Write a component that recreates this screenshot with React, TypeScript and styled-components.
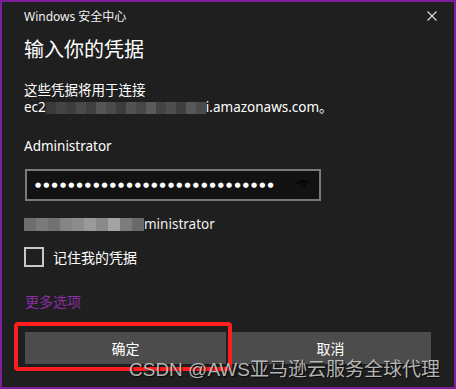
import styled, { createGlobalStyle } from "styled-components";

const GlobalStyle = createGlobalStyle`
    html, body {
        margin: 0;
        padding: 0;
        background: #1f1f1f;
    }
    * {
        box-sizing: border-box;
    }
`;

const FONT = `"Noto Sans", "Noto Sans CJK SC", sans-serif`;

const hiddenHost = ["#3a3a3a", "#444", "#3d3d3d", "#4a4a4a", "#404040", "#555", "#4b4b4b", "#3c3c3c", "#525252", "#474747", "#5a5a5a", "#444", "#4e4e4e", "#3f3f3f", "#585858", "#4a4a4a"];
const hiddenUser = ["#6e6e6e", "#7a7a7a", "#727272", "#858585", "#8c8c8c", "#9a9a9a", "#8a8a8a", "#a3a3a3", "#7c7c7c", "#6a6a6a"];

const App = () => {
    return (
        <>
            <GlobalStyle />
            <Window>
                <TitleBar>
                    <AppName>Windows 安全中心</AppName>
                    <CloseButton aria-label="close">
                        <svg width="10" height="10" viewBox="0 0 10 10">
                            <path d="M0.5 0.5 L9.5 9.5 M9.5 0.5 L0.5 9.5" stroke="#e0e0e0" strokeWidth="1.1" />
                        </svg>
                    </CloseButton>
                </TitleBar>
                <Content>
                    <Heading>输入你的凭据</Heading>
                    <Message>
                        <span>这些凭据将用于连接</span>
                        <Line>
                            ec2
                            <Mosaic>
                                {hiddenHost.map((c, i) => (
                                    <Tile key={i} style={{ background: c }} />
                                ))}
                            </Mosaic>
                            i.amazonaws.com。
                        </Line>
                    </Message>
                    <UserName>Administrator</UserName>
                    <PasswordBox>
                        <Dots>{"●".repeat(29)}</Dots>
                        <EyeIcon width="14" height="10" viewBox="0 0 14 10">
                            <path d="M1 6 C3 1.5, 11 1.5, 13 6" fill="none" stroke="#020202" strokeWidth="1.2" />
                            <circle cx="7" cy="6.5" r="2" fill="none" stroke="#020202" strokeWidth="1.2" />
                        </EyeIcon>
                    </PasswordBox>
                    <Account>
                        <Mosaic $tall>
                            {hiddenUser.map((c, i) => (
                                <Tile key={i} $wide style={{ background: c }} />
                            ))}
                        </Mosaic>
                        ministrator
                    </Account>
                    <Remember>
                        <Checkbox />
                        <span>记住我的凭据</span>
                    </Remember>
                    <MoreLink>更多选项</MoreLink>
                </Content>
                <Buttons>
                    <Button>确定</Button>
                    <Button>取消</Button>
                </Buttons>
                <Highlight />
                <Watermark>CSDN @AWS亚马逊云服务全球代理</Watermark>
            </Window>
        </>
    );
};

const Window = styled.div`
    position: relative;
    width: 456px;
    height: 389px;
    display: flex;
    flex-flow: column;

    background: #1f1f1f;
    border: 2px solid #7d1f9c;
    color: #ffffff;
    font-family: ${FONT};
    overflow: hidden;
`;

const TitleBar = styled.div`
    display: flex;
    align-items: center;
    justify-content: space-between;
    height: 32px;
    padding: 0 17px 0 22px;
    margin-top: -2px;
`;

const AppName = styled.span`
    font-size: 12px;
    color: #f2f2f2;
`;

const CloseButton = styled.div`
    display: flex;
    width: 10px;
    height: 10px;
`;

const Content = styled.div`
    display: flex;
    flex-flow: column;
    align-items: flex-start;
    padding: 0 22px;
`;

const Heading = styled.h1`
    margin: 4px 0 0;
    font-size: 20px;
    font-weight: 400;
    line-height: 28px;
`;

const Message = styled.div`
    display: flex;
    flex-flow: column;
    margin-top: 18px;
    font-size: 13.5px;
    line-height: 17px;
`;

const Line = styled.div`
    display: flex;
    align-items: center;
`;

const Mosaic = styled.span<{ $tall?: boolean }>`
    display: inline-flex;
    height: ${(p) => (p.$tall ? "13px" : "12px")};
`;

const Tile = styled.span<{ $wide?: boolean }>`
    width: ${(p) => (p.$wide ? "12px" : "10px")};
    height: 100%;
`;

const UserName = styled.div`
    margin-top: 20px;
    font-size: 13.5px;
    line-height: 20px;
`;

const PasswordBox = styled.div`
    display: flex;
    align-items: center;
    justify-content: space-between;
    width: 296px;
    height: 32px;
    margin: 13px 0 0 1px;
    padding: 0 8px 0 8px;

    background: #121212;
    border: 2px solid #7a7a7a;
`;

const Dots = styled.span`
    font-family: "DejaVu Sans", sans-serif;
    font-size: 7px;
    letter-spacing: 2.2px;
    color: #ffffff;
`;

const EyeIcon = styled.svg`
    margin-top: -4px;
    margin-right: 1px;
`;

const Account = styled.div`
    display: flex;
    align-items: center;
    margin-top: 13px;
    font-size: 13.5px;
    line-height: 20px;
    color: #f0f0f0;
`;

const Remember = styled.label`
    display: flex;
    align-items: center;
    gap: 9px;
    margin-top: 13px;
    font-size: 14px;
`;

const Checkbox = styled.span`
    width: 20px;
    height: 20px;
    border: 2px solid #c8c8c8;
`;

const MoreLink = styled.a`
    margin: 25px 0 0 1px;
    font-size: 14px;
    line-height: 20px;
    color: #8a2ea6;
`;

const Buttons = styled.div`
    display: flex;
    gap: 4px;
    margin: 20px 0 0 23px;
    width: 406px;

    & > * {
        flex: 1;
    }
`;

const Button = styled.div`
    display: flex;
    align-items: center;
    justify-content: center;
    height: 32px;
    background: #4c4c4c;
    font-size: 14px;
`;

const Highlight = styled.div`
    position: absolute;
    left: 12px;
    top: 320px;
    width: 218px;
    height: 49px;
    border: 4.5px solid #ff1d1d;
    border-radius: 4px;
`;

const Watermark = styled.div`
    position: absolute;
    left: 127px;
    top: 357px;
    font-family: "Liberation Sans", "Noto Sans CJK SC", sans-serif;
    font-size: 19px;
    line-height: 22px;
    color: rgba(210, 210, 210, 0.85);
    text-shadow: 1px 1px 1px rgba(0, 0, 0, 0.8);
    white-space: nowrap;
`;

export default App;
